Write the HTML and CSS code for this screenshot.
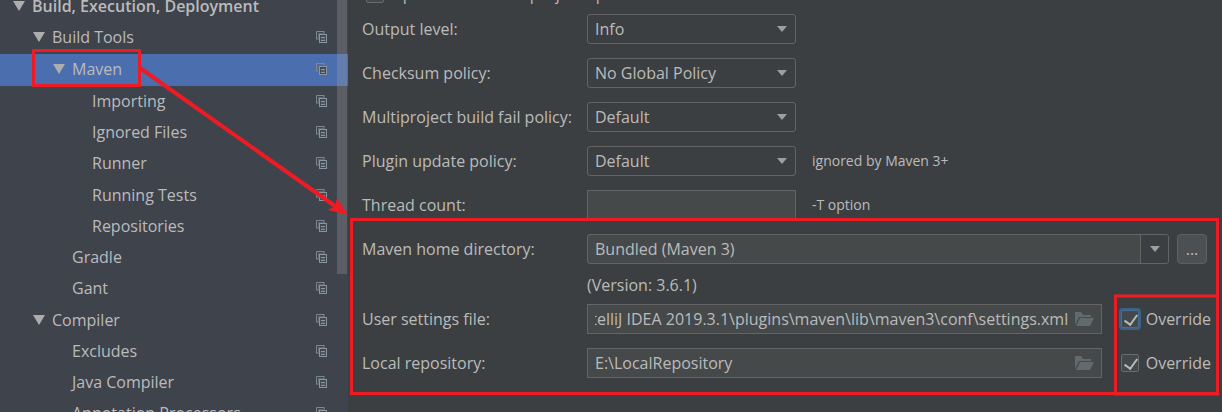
FILE: index.html
```html
<!DOCTYPE html>
<html lang="en">
<head>
<meta charset="utf-8">
<title>Settings</title>
<link rel="stylesheet" href="styles.css">
</head>
<body>
<svg class="defs" aria-hidden="true">
  <symbol id="copy" viewBox="0 0 11 12">
    <path d="M.5 8V.5H8M0 8h3M8 0v3" fill="none" stroke="#7b8893"/>
    <path d="M2 2h7v2H4v5H2z" fill="#5d6873"/>
    <rect x="3.500" y="3.500" width="7" height="8" fill="#444a54" stroke="#8996a1"/>
    <path d="M5 6.500h4M5 9.500h4" stroke="#8996a1"/><path d="M5 8h4" stroke="#5d6873"/>
  </symbol>
  <symbol id="folder" viewBox="0 0 19 15">
    <path d="M0 13V0h6l2 3h8v2H4L0 13z" fill="#626a6e"/>
    <path d="M5 6h14l-4 8H1z" fill="#626a6e"/>
  </symbol>
  <symbol id="down" viewBox="0 0 10 6"><path d="M0 0h10L5 6z" fill="#9da0a3"/></symbol>
  <symbol id="open" viewBox="0 0 12 10"><path d="M0 0h12L6 10z" fill="#adadad"/></symbol>
</svg>
<div class="window">
  <nav class="sidebar" aria-label="Settings tree">
    <ul class="tree">
      <li class="node level-0"><svg class="twisty"><use href="#open"/></svg><span class="name">Build, Execution, Deployment</span></li>
      <li class="node level-1"><svg class="twisty"><use href="#open"/></svg><span class="name">Build Tools</span><svg class="copy"><use href="#copy"/></svg></li>
      <li class="node level-2 selected"><svg class="twisty"><use href="#open"/></svg><span class="name">Maven</span><svg class="copy"><use href="#copy"/></svg></li>
      <li class="node level-3"><span class="name">Importing</span><svg class="copy"><use href="#copy"/></svg></li>
      <li class="node level-3"><span class="name">Ignored Files</span><svg class="copy"><use href="#copy"/></svg></li>
      <li class="node level-3"><span class="name">Runner</span><svg class="copy"><use href="#copy"/></svg></li>
      <li class="node level-3 spaced"><span class="name">Running Tests</span><svg class="copy"><use href="#copy"/></svg></li>
      <li class="node level-3"><span class="name">Repositories</span><svg class="copy"><use href="#copy"/></svg></li>
      <li class="node level-2"><span class="name">Gradle</span><svg class="copy"><use href="#copy"/></svg></li>
      <li class="node level-2"><span class="name">Gant</span><svg class="copy"><use href="#copy"/></svg></li>
      <li class="node level-1 spaced"><svg class="twisty"><use href="#open"/></svg><span class="name">Compiler</span><svg class="copy"><use href="#copy"/></svg></li>
      <li class="node level-2"><span class="name">Excludes</span><svg class="copy"><use href="#copy"/></svg></li>
      <li class="node level-2"><span class="name">Java Compiler</span><svg class="copy"><use href="#copy"/></svg></li>
      <li class="node level-2"><span class="name">Annotation Processors</span><svg class="copy"><use href="#copy"/></svg></li>
    </ul>
    <div class="scrollbar"></div>
  </nav>
  <main class="panel">
    <div class="top-option"><input class="check" type="checkbox" id="indices"><label for="indices">Update indices on project open</label></div>
    <div class="row">
      <label class="label" for="output">Output level:</label>
      <span class="combo"><select class="select" id="output"><option>Info</option></select><svg class="caret"><use href="#down"/></svg></span>
    </div>
    <div class="row">
      <label class="label" for="checksum">Checksum policy:</label>
      <span class="combo"><select class="select" id="checksum"><option>No Global Policy</option></select><svg class="caret"><use href="#down"/></svg></span>
    </div>
    <div class="row">
      <label class="label" for="fail">Multiproject build fail policy:</label>
      <span class="combo"><select class="select" id="fail"><option>Default</option></select><svg class="caret"><use href="#down"/></svg></span>
    </div>
    <div class="row">
      <label class="label" for="plugin">Plugin update policy:</label>
      <span class="combo"><select class="select" id="plugin"><option>Default</option></select><svg class="caret"><use href="#down"/></svg></span>
      <span class="hint">ignored by Maven 3+</span>
    </div>
    <div class="row">
      <label class="label" for="threads">Thread count:</label>
      <span class="field short"><input class="text" id="threads" type="text"></span>
      <span class="hint">-T option</span>
    </div>
    <div class="row home">
      <label class="label" for="home">Maven home directory:</label>
      <span class="field rounded"><input class="text" id="home" type="text" value="Bundled (Maven 3)"><button class="drop" type="button" aria-label="Show list"><svg class="arrow"><use href="#down"/></svg></button></span>
      <button class="browse" type="button">...</button>
    </div>
    <div class="row version"><span class="label"></span><span>(Version: 3.6.1)</span></div>
    <div class="row">
      <label class="label" for="settings">User settings file:</label>
      <span class="field"><input class="text" id="settings" type="text" value="IntelliJ IDEA 2019.3.1\plugins\maven\lib\maven3\conf\settings.xml"><svg class="folder"><use href="#folder"/></svg></span>
      <span class="override"><input class="check focused" type="checkbox" id="ov1" checked><label for="ov1">Override</label></span>
    </div>
    <div class="row">
      <label class="label" for="repo">Local repository:</label>
      <span class="field"><input class="text" id="repo" type="text" value="E:\LocalRepository"><svg class="folder"><use href="#folder"/></svg></span>
      <span class="override"><input class="check" type="checkbox" id="ov2" checked><label for="ov2">Override</label></span>
    </div>
  </main>
  <svg class="marks" viewBox="0 0 1222 412" aria-hidden="true">
    <g fill="none" stroke="#ed1c24" stroke-width="3">
      <rect x="33.500" y="50.500" width="106" height="35"/>
      <rect x="351.500" y="219.500" width="866" height="174"/>
      <rect x="1115.500" y="296" width="102" height="98"/>
      <path d="M140 68L335 206" stroke-width="4"/>
    </g>
    <path d="M348 215L328 210L335 206L337 198z" fill="#ed1c24"/>
  </svg>
</div>
<script src="main.js"></script>
</body>
</html>
```
FILE: styles.css
```css
* { box-sizing: border-box; }
body {
  margin: 0;
  background: #3c3f41;
  color: #bbbbbb;
  font: 16px/20px "Open Sans", "Noto Sans", sans-serif;
}
.defs { display: none; }
.window {
  position: relative;
  display: flex;
  height: 100vh;
  overflow: hidden;
}
.sidebar {
  position: relative;
  flex: 0 0 348px;
  background: #3f434c;
  overflow: hidden;
}
.tree { list-style: none; margin: -10px 0 0; padding: 0; }
.node {
  display: flex;
  align-items: center;
  height: 31px;
  padding-right: 21px;
}
.spaced { margin-top: 1px; }
.selected { height: 32px; margin: 2px 0 -1px; padding-bottom: 2px; background: #4b6eaf; }
.level-0 { padding-left: 32px; font-weight: 600; }
.level-1 { padding-left: 52px; }
.level-2 { padding-left: 72px; }
.level-3 { padding-left: 92px; }
.name { flex: 1; white-space: nowrap; }
.twisty { width: 12px; height: 10px; margin: 0 7px 0 -19px; }
.copy { width: 11px; height: 12px; }
.scrollbar {
  position: absolute;
  top: 0;
  right: 1px;
  width: 10px;
  height: 274px;
  background: rgba(166, 166, 166, 0.28);
}
.panel {
  flex: 1;
  min-width: 0;
  padding: 0 15px 0 14px;
}
.top-option {
  display: flex;
  align-items: center;
  gap: 7px;
  height: 20px;
  margin: -16px 0 10px 4px;
}
.row {
  display: flex;
  align-items: center;
  height: 30px;
  margin-bottom: 14px;
}
.label { flex: 0 0 225px; white-space: nowrap; }
.home { margin-bottom: 8px; }
.version { height: 26px; margin-bottom: 6px; }
.combo { position: relative; flex: 0 0 209px; height: 30px; }
.select {
  width: 100%;
  height: 30px;
  padding: 0 7px;
  appearance: none;
  border: 1px solid #646464;
  border-radius: 3px;
  background: #3c3f41;
  color: inherit;
  font: inherit;
}
.caret { position: absolute; top: 12px; right: 9px; width: 10px; height: 6px; pointer-events: none; }
.hint { margin-left: 16px; font-size: 14px; }
.field {
  display: flex;
  align-items: center;
  flex: 1;
  min-width: 0;
  height: 30px;
  border: 1px solid #646464;
  background: #45494a;
}
.short { flex: 0 0 209px; }
.rounded { border-radius: 3px; overflow: hidden; }
.text {
  flex: 1;
  min-width: 0;
  height: 28px;
  margin: 0 7px;
  padding: 0;
  border: 0;
  outline: 0;
  background: transparent;
  color: inherit;
  font: inherit;
}
.folder { width: 19px; height: 15px; margin-right: 7px; }
.drop {
  display: grid;
  place-items: center;
  width: 28px;
  height: 28px;
  padding: 0;
  border: 0;
  border-left: 1px solid #646464;
  background: #3c3f41;
}
.arrow { width: 10px; height: 6px; }
.browse {
  width: 30px;
  height: 30px;
  margin-left: 8px;
  padding: 0;
  border: 1px solid #5e6060;
  border-radius: 4px;
  background: #4c5052;
  color: inherit;
  font: inherit;
}
.override { display: flex; align-items: center; gap: 7px; margin-left: 19px; margin-right: -4px; }
.check {
  position: relative;
  width: 18px;
  height: 18px;
  margin: 0;
  appearance: none;
  border: 1px solid #6b6b6b;
  border-radius: 2px;
  background: #43494a;
}
.check:checked::after {
  content: "";
  position: absolute;
  left: 5px;
  top: 1px;
  width: 6px;
  height: 11px;
  border: solid #bbbbbb;
  border-width: 0 2px 2px 0;
  transform: rotate(36deg);
}
.focused { border-color: #466d94; box-shadow: 0 0 0 2px #3d6185; }
.marks {
  position: absolute;
  top: 0;
  left: 0;
  width: 1222px;
  height: 412px;
  pointer-events: none;
}
```
FILE: main.js
```js
const settings = document.getElementById("settings");
settings.scrollLeft = settings.scrollWidth;
```
